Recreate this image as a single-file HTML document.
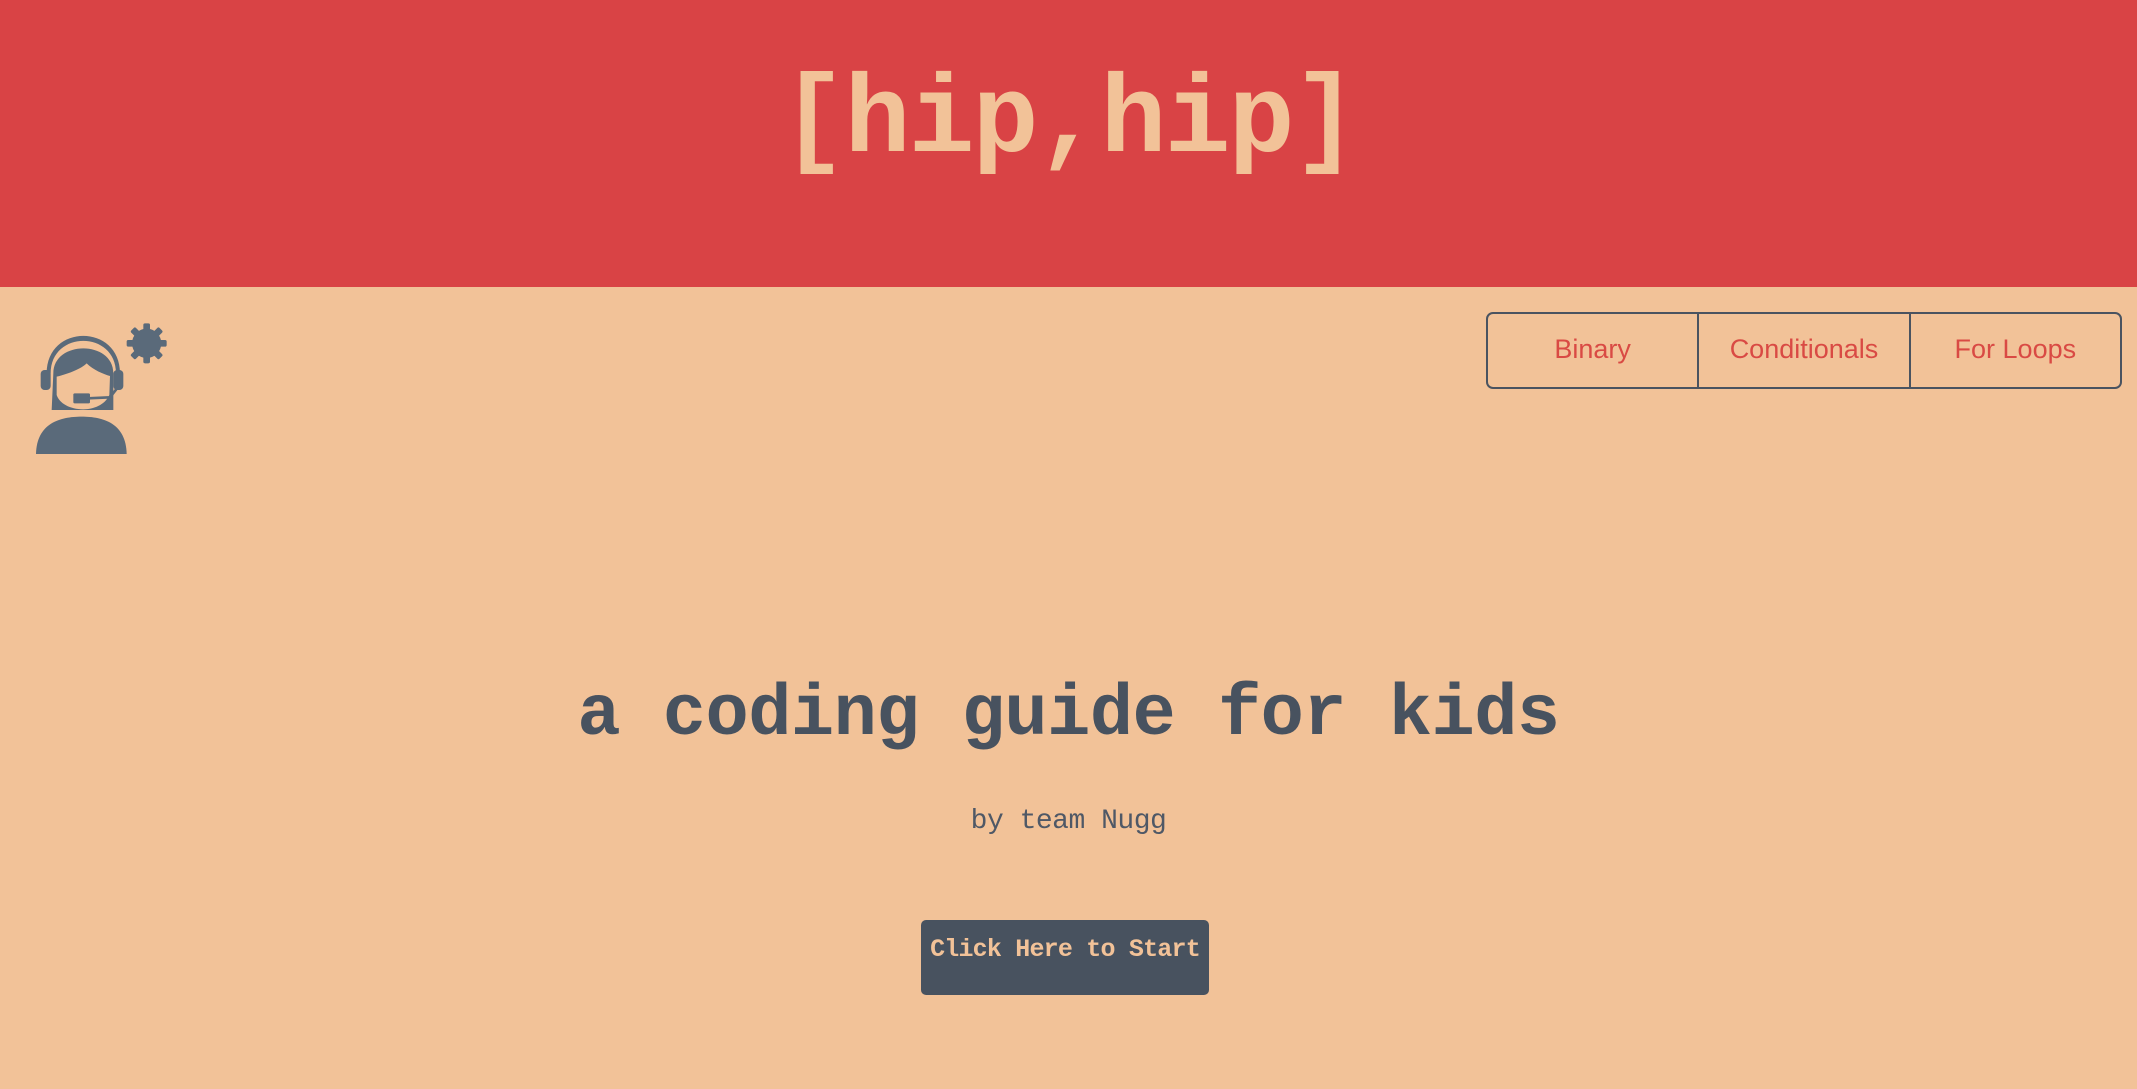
<!DOCTYPE html>
<html><head><meta charset="utf-8"><style>
html,body{margin:0;padding:0;width:2137px;height:1089px;overflow:hidden;background:#f2c298;font-family:"Liberation Mono",monospace}
.hdr{position:absolute;left:0;top:0;width:2137px;height:287px;background:#d94345}
.title{position:absolute;left:0;width:2137px;top:48px;text-align:center;font-size:110px;font-weight:bold;color:#f2c298;line-height:150px;letter-spacing:-2px}
.nav{position:absolute;left:1486px;top:312px;width:632px;height:73px;border:2.5px solid #4a5360;border-radius:7px;display:flex}
.nav div{flex:1;display:flex;align-items:center;justify-content:center;font-family:"Liberation Sans",sans-serif;font-size:27px;color:#d94a44;border-left:2px solid #4a5360;padding-bottom:2px}
.nav div:first-child{border-left:none}
.h1{position:absolute;left:0;width:2137px;top:665px;text-align:center;font-size:72px;font-weight:bold;color:#48525f;line-height:100px;letter-spacing:-0.5px}
.by{position:absolute;left:0;width:2137px;top:802px;text-align:center;font-size:28px;color:#4f5866;line-height:40px;letter-spacing:-0.5px}
.btn{position:absolute;left:921px;top:920px;width:288px;height:75px;background:#48525f;border-radius:5px;color:#f2c298;font-weight:bold;font-size:25px;text-align:center;line-height:60px;letter-spacing:-0.8px}
</style></head><body>
<div class="hdr"><div class="title">[hip,hip]</div></div>
<svg style="position:absolute;left:20px;top:310px" width="160" height="160" viewBox="0 0 480 480">
<g fill="#5a6a7a">
<path d="M80 190 C80 40 300 40 300 190 L288 190 C288 60 92 60 92 190Z"/>
<path d="M100 190 C100 90 280 90 280 190 L280 300 L95 300 Z"/>
<rect x="62" y="180" width="30" height="60" rx="12"/>
<rect x="280" y="180" width="30" height="60" rx="12"/>
<path d="M48 432 C50 340 120 320 185 320 C250 320 318 340 320 432Z"/>
<circle cx="380" cy="100" r="44"/>
<g transform="translate(380 100)">
<rect x="-10" y="-60" width="20" height="120" rx="5"/>
<rect x="-10" y="-60" width="20" height="120" rx="5" transform="rotate(45)"/>
<rect x="-10" y="-60" width="20" height="120" rx="5" transform="rotate(90)"/>
<rect x="-10" y="-60" width="20" height="120" rx="5" transform="rotate(135)"/>
</g>
</g>
<path d="M110 200 C150 190 185 175 200 160 C220 180 250 192 270 198 L268 255 C255 285 220 298 190 298 C150 298 118 280 110 255Z" fill="#f2c298"/>
<rect x="160" y="250" width="50" height="30" rx="4" fill="#5a6a7a"/>
<path d="M205 265 L270 262 L295 230" stroke="#5a6a7a" stroke-width="8" fill="none"/>
</svg>
<div class="nav"><div>Binary</div><div>Conditionals</div><div>For Loops</div></div>
<div class="h1">a coding guide for kids</div>
<div class="by">by team Nugg</div>
<div class="btn">Click Here to Start</div>
</body></html>
